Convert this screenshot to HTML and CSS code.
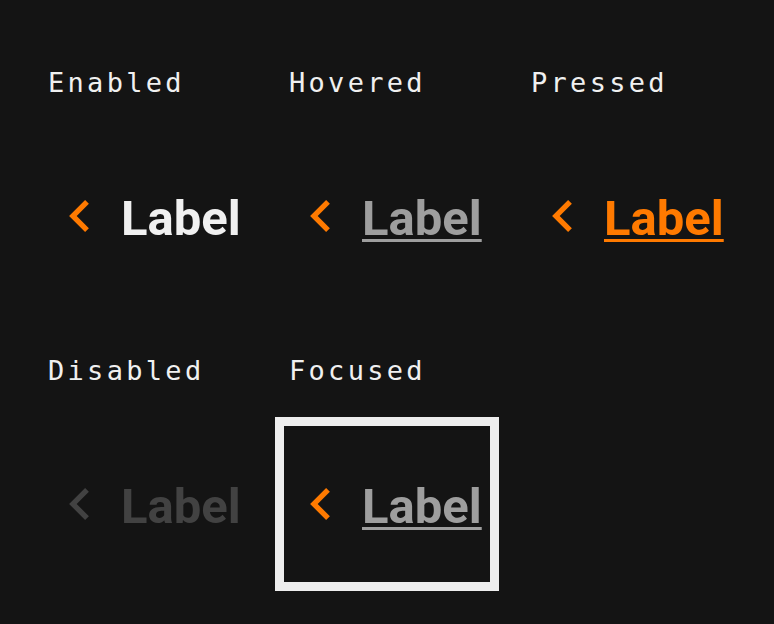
FILE: index.html
```html
<!DOCTYPE html>
<html lang="en">
<head>
<meta charset="utf-8">
<title>Link states</title>
<link rel="stylesheet" href="styles.css">
</head>
<body>
<div class="grid">
  <div class="cell">
    <div class="caption">Enabled</div>
    <div class="link enabled">
      <svg class="chev" viewBox="8 6 7.41 12" width="20" height="32"><path d="M15.41 7.41L14 6l-6 6 6 6 1.41-1.41L10.83 12z"/></svg>
      <span class="label">Label</span>
    </div>
  </div>
  <div class="cell">
    <div class="caption">Hovered</div>
    <div class="link hovered">
      <svg class="chev" viewBox="8 6 7.41 12" width="20" height="32"><path d="M15.41 7.41L14 6l-6 6 6 6 1.41-1.41L10.83 12z"/></svg>
      <span class="label">Label</span>
    </div>
  </div>
  <div class="cell">
    <div class="caption">Pressed</div>
    <div class="link pressed">
      <svg class="chev" viewBox="8 6 7.41 12" width="20" height="32"><path d="M15.41 7.41L14 6l-6 6 6 6 1.41-1.41L10.83 12z"/></svg>
      <span class="label">Label</span>
    </div>
  </div>
  <div class="cell">
    <div class="caption">Disabled</div>
    <div class="link disabled">
      <svg class="chev" viewBox="8 6 7.41 12" width="20" height="32"><path d="M15.41 7.41L14 6l-6 6 6 6 1.41-1.41L10.83 12z"/></svg>
      <span class="label">Label</span>
    </div>
  </div>
  <div class="cell">
    <div class="caption">Focused</div>
    <div class="link focused">
      <svg class="chev" viewBox="8 6 7.41 12" width="20" height="32"><path d="M15.41 7.41L14 6l-6 6 6 6 1.41-1.41L10.83 12z"/></svg>
      <span class="label">Label</span>
    </div>
  </div>
</div>
</body>
</html>
```
FILE: styles.css
```css
html, body {
  margin: 0;
  padding: 0;
  background: #141414;
}
body {
  width: 774px;
  height: 624px;
  overflow: hidden;
}
.grid {
  display: grid;
  grid-template-columns: 241px 242px 200px;
  row-gap: 61px;
  padding: 67px 0 0 47px;
}
.caption {
  font-family: "DejaVu Sans Mono", monospace;
  font-size: 27px;
  line-height: 32px;
  letter-spacing: 3.3px;
  color: #f0f0f0;
  margin-bottom: 39px;
  padding-left: 1px;
  white-space: nowrap;
}
.link {
  display: flex;
  align-items: center;
  gap: 32px;
  box-sizing: border-box;
  width: 206px;
  height: 156px;
  padding-left: 26px;
  margin-left: -4px;
}
.chev {
  display: block;
  fill: #ff7a00;
  flex: none;
}
.label {
  font-family: Roboto, "Liberation Sans", sans-serif;
  font-weight: 700;
  font-size: 49px;
  line-height: 56px;
  padding-top: 5px;
  white-space: nowrap;
}
.enabled .label { color: #f0f0f0; }
.hovered .label,
.focused .label {
  color: #9e9e9e;
  text-decoration: underline;
  text-decoration-thickness: 3px;
  text-underline-offset: 4px;
}
.pressed .label {
  color: #ff7a00;
  text-decoration: underline;
  text-decoration-thickness: 3px;
  text-underline-offset: 4px;
}
.disabled .chev { fill: #424242; }
.disabled .label { color: #424242; }
.focused {
  outline: 9px solid #eeeeee;
}
```
